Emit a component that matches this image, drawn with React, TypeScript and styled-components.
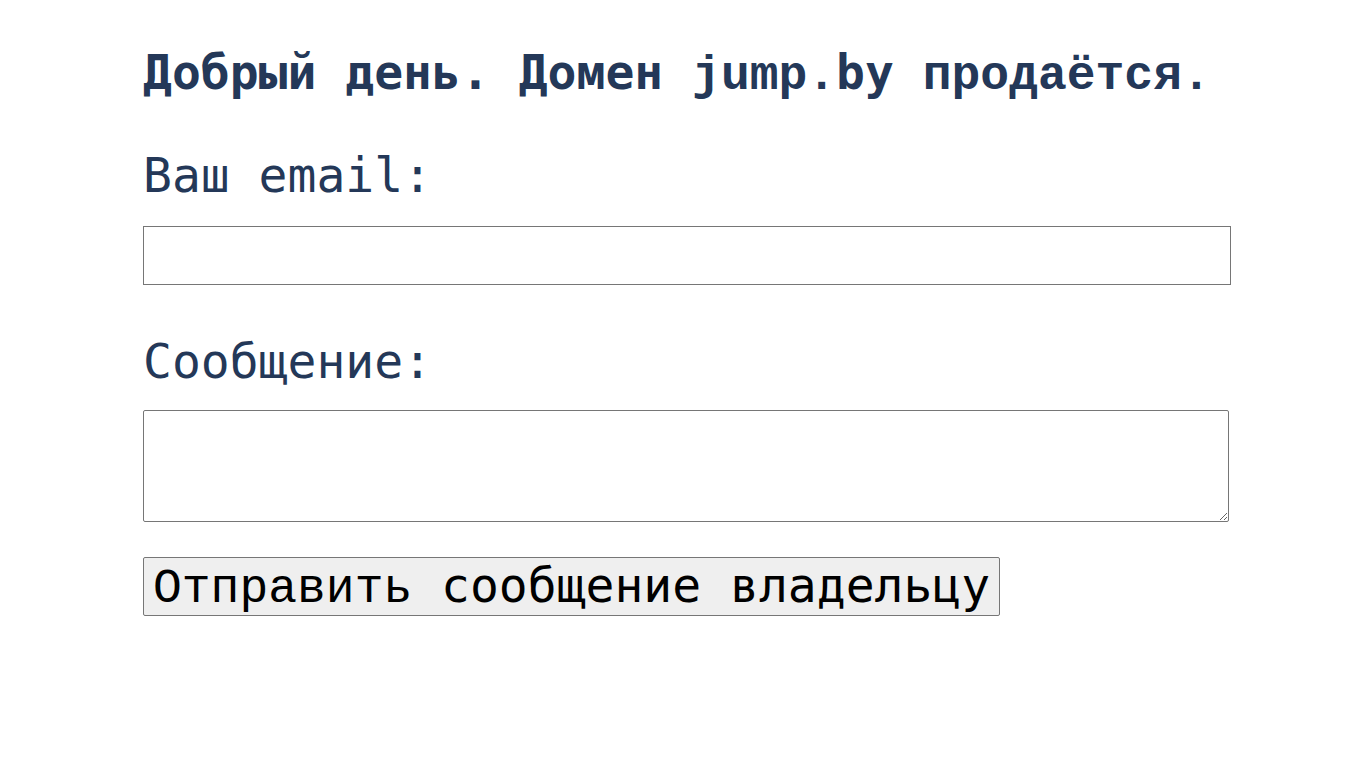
import React from "react";
import styled, { createGlobalStyle } from "styled-components";

const GlobalStyle = createGlobalStyle`
  html, body {
    margin: 0;
    padding: 0;
    background: #ffffff;
  }
  body {
    font-family: "DejaVu Sans Mono", monospace;
  }
`;

const MONO_SANS = `"DejaVu Sans Mono", "Liberation Mono", monospace`;
const MONO_SERIF = `"Liberation Mono", "DejaVu Sans Mono", monospace`;

const Page = styled.main`
  display: flex;
  flex-direction: column;
  align-items: flex-start;
  padding: 45px 0 0 143px;
  color: #243858;
`;

const Title = styled.h1`
  margin: 0;
  font-size: 48px;
  line-height: 55px;
  font-weight: 700;
  white-space: pre;
`;

interface FaceProps {
  $face: "sans" | "serif";
}
const Face = styled.span<FaceProps>`
  font-family: ${({ $face }) => ($face === "serif" ? MONO_SERIF : MONO_SANS)};
`;

interface LabelProps {
  $gap: number;
}
const Label = styled.label<LabelProps>`
  display: block;
  margin-top: ${({ $gap }) => $gap}px;
  font-family: ${MONO_SANS};
  font-size: 48px;
  line-height: 55px;
  font-weight: 400;
  white-space: pre;
`;

const EmailInput = styled.input`
  box-sizing: border-box;
  width: 1088px;
  height: 59px;
  margin: 23px 0 0;
  padding: 1px 2px;
  border: 1px solid #767676;
  border-radius: 0;
  font-family: ${MONO_SANS};
  font-size: 47px;
  background: #ffffff;
`;

const MessageArea = styled.textarea`
  box-sizing: border-box;
  width: 1086px;
  height: 112px;
  margin: 21px 0 0;
  padding: 2px;
  border: 1px solid #767676;
  border-radius: 2px;
  font-family: ${MONO_SANS};
  font-size: 16px;
  background: #ffffff;
`;

const SendButton = styled.button`
  box-sizing: border-box;
  height: 59px;
  margin: 35px 0 0;
  padding: 0 9px;
  border: 1px solid #767676;
  border-radius: 2px;
  background: #efefef;
  color: #000000;
  font-size: 48px;
  line-height: 55px;
  white-space: pre;
  cursor: pointer;
`;

export default function App(): React.ReactElement {
  return (
    <>
      <GlobalStyle />
      <Page>
        <Title>
          <Face $face="sans">Добрый день. Домен </Face>
          <Face $face="serif">jump.</Face>
          <Face $face="sans">by</Face>
          <Face $face="serif"> продаётся.</Face>
        </Title>
        <Label $gap={44} htmlFor="email">Ваш email:</Label>
        <EmailInput id="email" type="email" />
        <Label $gap={49} htmlFor="message">Сообщение:</Label>
        <MessageArea id="message" />
        <SendButton type="button">
          <Face $face="serif">Отправить </Face>
          <Face $face="sans">сообщение владельцу</Face>
        </SendButton>
      </Page>
    </>
  );
}
